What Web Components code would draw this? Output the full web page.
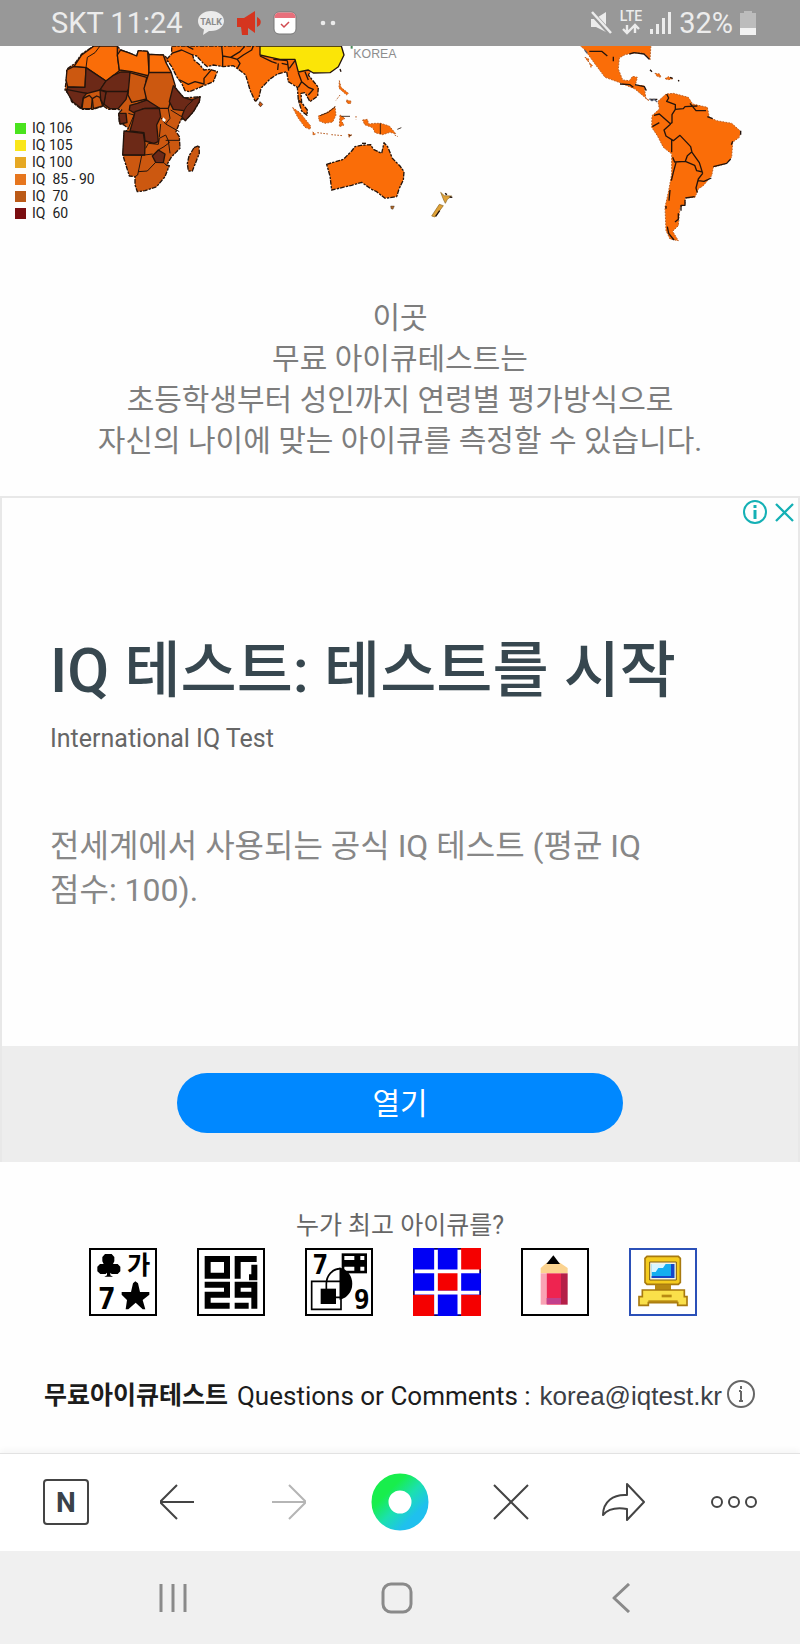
<!DOCTYPE html>
<html lang="ko">
<head>
<meta charset="utf-8">
<meta name="viewport" content="width=device-width, initial-scale=1">
<title>무료아이큐테스트</title>
<style>
    body{
        margin: 0;
        background: #fefefe;
        font-family: Roboto, "Noto Sans CJK KR", sans-serif;
    }
</style>
</head>
<body>
<iq-app>
    <status-bar slot="top"></status-bar>
    <iq-map></iq-map>
    <iq-intro>
        <span>이곳</span>
        <span>무료 아이큐테스트는</span>
        <span>초등학생부터 성인까지 연령별 평가방식으로</span>
        <span>자신의 나이에 맞는 아이큐를 측정할 수 있습니다.</span>
    </iq-intro>
    <ad-card>
        <span slot="title">IQ 테스트: 테스트를 시작</span>
        <span slot="brand">International IQ Test</span>
        <span slot="text">전세계에서 사용되는 공식 IQ 테스트 (평균 IQ 점수: 100).</span>
        <span slot="action">열기</span>
    </ad-card>
    <iq-puzzles>누가 최고 아이큐를?</iq-puzzles>
    <iq-contact mail="korea@iqtest.kr">
        <b slot="name">무료아이큐테스트</b>
        Questions or Comments :
    </iq-contact>
    <browser-toolbar slot="bottom"></browser-toolbar>
    <system-nav slot="bottom"></system-nav>
</iq-app>

<script>
class IqApp extends HTMLElement{
    constructor(){
        super()
        this.attachShadow({mode: 'open'})
        this.shadowRoot.innerHTML = `
            <style>
                :host{
                    display: flex;
                    flex-direction: column;
                    min-height: 100vh;
                }
                main{
                    flex: 1;
                    display: flex;
                    flex-direction: column;
                }
            </style>
            <slot name="top"></slot>
            <main><slot></slot></main>
            <slot name="bottom"></slot>
        `
    }
}

class StatusBar extends HTMLElement{
    constructor(){
        super()
        this.attachShadow({mode: 'open'})
        this.shadowRoot.innerHTML = `
            <style>
                :host{
                    display: flex;
                    justify-content: space-between;
                    align-items: center;
                    height: 46px;
                    padding: 0 43px 0 51px;
                    background: #989898;
                    color: #ececec;
                    font-size: 29px;
                    line-height: 48px;
                }
                .group{
                    display: flex;
                    align-items: center;
                    gap: 12px;
                }
                .left span{
                    margin-right: 2px;
                }
                .right{
                    gap: 7px;
                }
                svg{
                    display: block;
                }
            </style>
            <div class="group left">
                <span>SKT 11:24</span>
                <svg width="28" height="26" viewBox="0 0 28 26">
                    <path d="M14 1C6.500 1 1 5.500 1 11c0 4 2.500 7 6 8.500L6 25l6-4h2c7.500 0 13-4.500 13-10S21.500 1 14 1z" fill="#ececec"/>
                    <text x="14" y="15" text-anchor="middle" font-size="9" font-weight="700" fill="#8b8b8b">TALK</text>
                </svg>
                <svg width="24" height="26" viewBox="0 0 24 26">
                    <path d="M0 8h7L18 1v22l-7-5v7H5l-1-8H0z" fill="#d5351f"/>
                    <path d="M20 7c5 2 5 8 0 10z" fill="#d5351f"/>
                </svg>
                <svg width="24" height="24" viewBox="0 0 24 24">
                    <rect x="1" y="1" width="22" height="22" rx="5" fill="#fff" stroke="#777"/>
                    <path d="M1.500 7V6a4.500 4.500 0 0 1 4.500-4.500h12A4.500 4.500 0 0 1 22.500 6v1z" fill="#e86f7b"/>
                    <path d="M8 13l3 3 5-5" fill="none" stroke="#d04a50" stroke-width="1.500"/>
                </svg>
                <svg width="36" height="8" viewBox="0 0 36 8" fill="#ececec">
                    <circle cx="14" cy="4" r="2.300"/><circle cx="24" cy="4" r="2.300"/>
                </svg>
            </div>
            <div class="group right">
                <svg width="22" height="24" viewBox="0 0 22 24">
                    <path d="M1 8h4l11-7v20L6 16H1z" fill="#ececec"/>
                    <path d="M0 0l21 23" stroke="#989898" stroke-width="5"/>
                    <path d="M2 1l19 21" stroke="#ececec" stroke-width="2.500"/>
                </svg>
                <svg width="24" height="28" viewBox="0 0 24 28">
                    <text x="12" y="12" text-anchor="middle" font-size="14" font-weight="500" fill="#ececec">LTE</text>
                    <path d="M8 16v8M4 20l4 4 4-4M16 24v-8M12 20l4-4 4 4" fill="none" stroke="#ececec" stroke-width="2.400"/>
                </svg>
                <svg width="22" height="24" viewBox="0 0 22 24" fill="#ececec">
                    <path d="M0 18h3v5H0zM6 13h3v10H6zM12 7h3v16h-3zM18 1h3v22h-3z"/>
                </svg>
                <span>32%</span>
                <svg width="17" height="25" viewBox="0 0 17 25">
                    <path d="M4 0h8v2h4v15H0V2h4z" fill="#bcbcbc"/>
                    <path d="M0 17h16v7H0z" fill="#f2f2f2"/>
                </svg>
            </div>
        `
    }
}

class IqMap extends HTMLElement{
    constructor(){
        super()
        this.attachShadow({mode: 'open'})
        this.shadowRoot.innerHTML = `
            <style>
                :host{
                    display: block;
                    position: relative;
                }
                svg{
                    display: block;
                    width: 100%;
                }
                path{
                    stroke-linejoin: round;
                }
                .hi{ fill: #fa6d08; }
                .mid{ fill: #cc5810; }
                .low{ fill: #6c2917; }
                .line{ fill: none; }
                .coast{ stroke-dasharray: 14 3 7 4; }
                .bare{ stroke: #b9622a; stroke-width: 3; stroke-dasharray: 5 4; }
                ul{
                    position: absolute;
                    left: 15px;
                    bottom: 24px;
                    margin: 0;
                    padding: 0;
                    list-style: none;
                    color: #222;
                    font-size: 14px;
                    line-height: 17px;
                }
                li{
                    display: flex;
                    align-items: center;
                    gap: 6px;
                    white-space: pre;
                }
                li::before{
                    content: "";
                    width: 11px;
                    height: 11px;
                    background: var(--c);
                }
            </style>
            <svg viewBox="0 138 2400 600" stroke="#24140c" stroke-width="4">
                <!-- Africa -->
                <path class="mid coast" d="M282 138H352L362 150 385 158 410 168 415 152 443 154 447 163 490 165 508 180 498 188 512 225 520 255 540 280 553 294 600 290 598 305 580 335 556 362 545 355 538 370 528 395 538 410 540 445 515 470 500 495 508 497 495 530 470 560 435 572 412 575 405 555V530L388 528 370 470 372 400 385 385 372 375 358 370 356 340 365 330 350 328 325 328 310 318 280 328 245 328 215 305 208 285 195 270 200 230 200 208 225 190 245 162z"/>
                <path class="hi" d="M282 138H352V165L358 212 330 235 318 243 258 203 222 200 245 165z"/>
                <path class="line" d="M300 138L285 158 262 172 258 203" stroke-width="3"/>
                <path class="hi" d="M352 165L362 150 385 158 410 168 415 152 443 154 447 215V228L395 215 358 210z"/>
                <path class="hi" d="M447 163L490 165 498 188 514 217H447z"/>
                <path class="mid" d="M220 200L258 203 255 262 203 260 198 240 201 210z"/>
                <path class="low" d="M258 203L318 243 300 270 262 280 200 275 203 262 255 262z"/>
                <path class="low" d="M318 243L340 226 362 216H390V260L382 274H320L300 270z"/>
                <path class="low" d="M198 268L260 280 250 292 244 325 218 305 206 285z"/>
                <path class="mid" d="M250 295L268 286 277 296 274 326H246z"/>
                <path class="mid" d="M277 296L290 288 300 292 308 318 280 326z"/>
                <path class="low" d="M318 275H384L378 298 355 325 330 326 311 312z"/>
                <path class="low" d="M300 270L318 276 311 316 302 298z"/>
                <path class="mid" d="M390 218L440 232 434 265 440 297 395 307 384 285z"/>
                <path class="mid" d="M447 218H514L526 258 505 325 470 325 440 300 432 265z"/>
                <path class="low" d="M390 316L412 310 440 300 478 324 430 326 405 340 388 330z"/>
                <path class="low" d="M520 257L550 292 575 300 600 290 598 305 580 335 556 362 545 350 552 332 520 328 508 305z"/>
                <path class="low" d="M405 335L435 325 478 326 482 350 470 375 475 425 462 430 435 423 432 398 390 393 398 365z"/>
                <path class="low" d="M356 340H378L381 368 360 372z"/>
                <path class="low" d="M372 393L430 400 435 432 434 465H368z"/>
                <path class="low" d="M457 468L475 450 495 462 490 488 467 487z"/>
                <path class="line" d="M370 465L425 466 458 462M425 467L413 525 405 530M467 487L442 513 415 515M437 445L445 430 475 433 478 415 497 405 508 428 492 440 475 450M497 421H540M505 422L510 460M482 352L497 372 538 395M482 372L478 412M505 327L510 355 497 372M512 330L545 350M385 340L402 345 385 385M492 488L500 497M552 332L560 318 580 300" stroke-width="3"/>
                <path d="M490 352l8 8-5 6-7-6z" fill="#fff" stroke="none"/>
                <path class="mid coast" d="M582 443L597 437 598 460 577 513 565 513 562 490 567 468z"/>

                <!-- Middle East and South Asia -->
                <path class="hi coast" d="M515 138H780L885 178 935 210 925 225 937 240 955 262 953 288 930 305 915 278 903 280 905 308 922 330 921 346 905 333 895 300 892 262 865 245 860 215 833 222 810 237 783 265 777 292 766 305 750 270 737 225 722 213 700 197 670 200 640 195 622 200 610 190 590 168 578 165 582 180 600 195 612 210 630 208 652 215 640 245 600 262 568 275 555 272 545 250 530 230 515 200 500 178 515 162z"/>
                <path class="line" d="M515 160L545 150 578 165M560 138L580 148M540 240L565 253 585 245 612 252 612 235 635 208M665 138L668 168 692 172 720 155 735 138M668 168V198M692 172L712 178 730 165 755 150 760 138M712 178L720 190 712 205M780 168L815 185 830 190M820 178L862 182M835 190L833 210M862 182L866 212M845 190L862 194M885 182L868 205M895 218L905 245 895 262M905 245L925 262 940 268 925 285M915 215L925 240M895 300L905 308"/>
                <path d="M780 138H1024L1032 165 1015 200 990 218 940 219 925 210 895 216 885 178 840 178 812 172 780 165z" fill="#fbe507"/>
                <path class="mid" d="M780 305l8 8-6 7-6-5z" stroke-width="2"/>
                <path class="line" d="M1020 207l3 8"/>
                <path d="M1052 138h6v8h-6z" fill="#4c8a5a" stroke="none"/>

                <!-- South-east Asia -->
                <g class="hi bare">
                    <path d="M878 323L900 338 932 378 930 388 915 382 895 355z"/>
                    <path d="M955 348L980 338 1005 320 1008 345 998 366 975 370 958 363z"/>
                    <path d="M1020 345L1035 355 1024 362 1032 375 1018 380z"/>
                    <path d="M1018 242L1023 262 1045 280 1040 285 1017 265z"/>
                    <path d="M1040 300l14 4-4 8-10-4zM1020 285l-12 16"/>
                    <path d="M1088 360L1102 358 1106 372 1125 370 1142 370 1168 378 1188 402 1170 397 1148 404 1125 398 1118 383 1094 374z"/>
                    <path d="M938 396l8 6-6 4zM952 398l32 4M994 404l34 3M1045 403l10 2-8 7zM1068 348v10M1184 405l10 5"/>
                </g>
                <path class="line" d="M960 347L985 337 1006 320M1141 370V402M1024 349H1050M1192 388l12-5M1046 408l8-3" stroke-width="2.500"/>

                <!-- Australia and New Zealand -->
                <path class="hi coast" d="M980 493L1030 478 1055 453 1065 440 1082 436 1112 434 1120 448 1145 460 1152 428 1163 440 1177 475 1200 498 1212 515 1210 540 1197 567 1190 590 1155 595 1130 575 1115 568 1085 547 1055 556 995 570 990 528z"/>
                <path class="line" d="M1086 430h12"/>
                <path d="M1172 618h11l-4 10-6-2z" fill="#a8672c" stroke-width="1"/>
                <path d="M1322 577L1333 587 1355 588 1342 598 1336 610 1331 600zM1295 648L1318 613 1330 617 1305 651z" fill="#dfa136" stroke="#8a6420" stroke-width="2"/>
                <path class="line" d="M1335 580l6 4M1349 591l8 1M1307 649l12-17"/>

                <!-- The Americas -->
                <g transform="translate(1710 132)">
                    <g class="hi bare">
                        <path d="M25 0H243L240 48 228 32 212 26 185 28 165 32 148 42 145 75 158 108 178 110 188 97 202 100 196 124 222 125 228 165 238 170 215 152 195 135 150 116 105 100 75 60 45 18z"/>
                        <path d="M45 40l12 6-2 8zM58 56l9 8-4 6z"/>
                        <path d="M255 88l14 2 4 10-12-3zM285 104l10-6 14 6-14 3z"/>
                        <path d="M264 172L288 150 310 148 355 160 368 180 412 190 418 220 440 230 485 238 512 262 508 280 488 295 485 340 470 358 430 370 425 395 400 425 385 435 375 460 345 462 345 482 330 490 325 545 308 562 325 590 300 585 288 560 285 490 296 440 305 390V330L280 310 262 275 245 250 246 215 268 195z"/>
                    </g>
                    <path class="line" d="M58 22L95 22 112 36M130 38v14M178 30L192 26 222 30 238 46M150 120L180 122 190 130M195 122l28 6 6 12M240 77l6 6M300 100l8 3M325 108l2 4M240 166h22M290 150L296 162 290 172 316 182V196L340 194 345 188 382 186M360 178L378 200 408 200M316 196L306 212V236L300 240M252 214L268 210 302 240M247 248L268 236M302 240L282 258 288 276 310 290 330 274 345 290 362 308 366 325 388 356 398 388M305 286V325M308 340L314 354 346 352 352 335 364 325M346 352L374 364 380 380 398 384M318 356L310 385 304 410M398 388L385 405 378 432 382 446M385 410L402 412 424 402M512 260v12M488 292l-4 10M482 345L470 358 430 368M300 438L297 470M288 486v8M292 548L296 568 312 588M346 462L374 458M345 468v16h-12v16M325 508v18l-10 8M412 218l16 6"/>
                    <path class="line" d="M238 164l8 6 6-4 10 8M44 18l8 10" stroke="#555d70"/>
                </g>
                <text x="1060" y="175" font-family="Liberation Sans, sans-serif" font-size="37" fill="#8d8d8d" stroke="none">KOREA</text>
            </svg>
            <ul>
                <li style="--c: #4ae31e">IQ 106</li>
                <li style="--c: #fae61a">IQ 105</li>
                <li style="--c: #e6a823">IQ 100</li>
                <li style="--c: #e6761e">IQ  85 - 90</li>
                <li style="--c: #bb5a17">IQ  70</li>
                <li style="--c: #7a0d10">IQ  60</li>
            </ul>
        `
    }
}

class IqIntro extends HTMLElement{
    constructor(){
        super()
        this.attachShadow({mode: 'open'})
        this.shadowRoot.innerHTML = `
            <style>
                :host{
                    display: block;
                    padding: 51px 16px 35px;
                    color: #7d7d7d;
                    font-size: 30px;
                    line-height: 41px;
                    text-align: center;
                }
                ::slotted(span){
                    display: block;
                }
                p{
                    margin: 0;
                }
            </style>
            <p><slot></slot></p>
        `
    }
}

class AdCard extends HTMLElement{
    constructor(){
        super()
        this.attachShadow({mode: 'open'})
        this.shadowRoot.innerHTML = `
            <style>
                :host{
                    display: block;
                    position: relative;
                    border: 2px solid #e8e8e8;
                    border-bottom: 0;
                }
                .marks{
                    position: absolute;
                    top: 1px;
                    right: 0;
                    display: flex;
                    gap: 4px;
                }
                .marks button{
                    width: 26px;
                    height: 26px;
                    padding: 0;
                    border: 0;
                    background: none;
                }
                svg{
                    display: block;
                }
                .body{
                    padding: 138px 130px 134px 48px;
                }
                h2{
                    margin: 0 -72px 17px 0;
                    color: #37474f;
                    font-size: 61px;
                    font-weight: 500;
                    line-height: 70px;
                }
                .brand{
                    margin: 0 0 69px;
                    color: #666;
                    font-size: 25px;
                    line-height: 32px;
                }
                .text{
                    margin: 0;
                    color: #878787;
                    font-size: 32px;
                    line-height: 44px;
                }
                .action{
                    padding: 27px 0 29px;
                    background: #ededed;
                }
                .action button{
                    display: block;
                    width: 56%;
                    height: 60px;
                    margin: 0 auto;
                    padding: 0 0 4px;
                    border: 0;
                    border-radius: 30px;
                    background: #0088ff;
                    color: #fff;
                    font: inherit;
                    font-size: 30px;
                }
            </style>
            <div class="marks">
                <button aria-label="광고 정보">
                    <svg width="26" height="26" viewBox="0 0 26 26" fill="none" stroke="#14b0b5" stroke-width="2">
                        <circle cx="13" cy="13" r="11"/>
                        <path d="M13 6v3M13 11v9" stroke-width="3"/>
                    </svg>
                </button>
                <button aria-label="광고 닫기">
                    <svg width="26" height="26" viewBox="0 0 26 26" fill="none" stroke="#14b0b5" stroke-width="2.300">
                        <path d="M4 5l17 17M21 5L4 22"/>
                    </svg>
                </button>
            </div>
            <div class="body">
                <h2><slot name="title"></slot></h2>
                <p class="brand"><slot name="brand"></slot></p>
                <p class="text"><slot name="text"></slot></p>
            </div>
            <div class="action">
                <button><slot name="action"></slot></button>
            </div>
        `
    }
}

class IqPuzzles extends HTMLElement{
    constructor(){
        super()
        this.attachShadow({mode: 'open'})
        this.shadowRoot.innerHTML = `
            <style>
                :host{
                    display: block;
                    padding: 48px 14px 0 0;
                }
                h3{
                    margin: 0 -14px 6px 0;
                    color: #666;
                    font-size: 25px;
                    font-weight: 400;
                    line-height: 32px;
                    text-align: center;
                }
                nav{
                    display: flex;
                    justify-content: center;
                    gap: 40px;
                }
                a{
                    color: #000;
                }
                svg{
                    display: block;
                    width: 68px;
                    height: 68px;
                }
                text{
                    font-family: "DejaVu Sans Mono", "Noto Sans CJK KR", monospace;
                    font-weight: 700;
                }
                .frame{
                    fill: #fff;
                    stroke: #000;
                    stroke-width: 6;
                }
            </style>
            <h3><slot></slot></h3>
            <nav>
                <a href="#memory" aria-label="기억력">
                    <svg viewBox="0 0 204 204">
                        <rect class="frame" x="3" y="3" width="198" height="198"/>
                        <path d="M48 18h20l8 9v13l-4 8h14l8 8v14l-8 8H68l-4-4v8l8 4H46l8-4v-8l-4 4H34l-9-8V56l8-8h11l-4-8V27z"/>
                        <path d="M139 100l8 6 6 26h28v8l-20 16 8 28h-8l-21-20-22 20h-8l4-28-16-16v-8h28l6-26z"/>
                        <text x="114" y="77" font-size="76">가</text>
                        <text x="26" y="184" font-size="90">7</text>
                    </svg>
                </a>
                <a href="#code" aria-label="암호">
                    <svg viewBox="0 0 204 204">
                        <rect class="frame" x="3" y="3" width="198" height="198"/>
                        <g fill="none" stroke="#000" stroke-width="18">
                            <path d="M32 33h58v50H32zM122 92V33h57M172 50v38h-16"/>
                            <path d="M23 110h67v30H32v33h66M172 182v-72h-50v30h50M113 173h42"/>
                        </g>
                    </svg>
                </a>
                <a href="#shape" aria-label="도형">
                    <svg viewBox="0 0 204 204">
                        <rect class="frame" x="3" y="3" width="198" height="198"/>
                        <text x="22" y="78" font-size="80">7</text>
                        <text x="146" y="184" font-size="80">9</text>
                        <path d="M110 16h76v60h-76z"/>
                        <path d="M118 24h30v12h-30zM166 24h12v12h-12zM118 56h30v12h-30zM166 56h12v12h-12z" fill="#fff"/>
                        <path d="M106 62a42 46 0 0 1 0 90z" stroke="#000" stroke-width="5"/>
                        <path d="M106 62a42 46 0 0 0-42 46v16M92 148h22M20 100h88v84H20z" fill="none" stroke="#000" stroke-width="5"/>
                        <path d="M47 122h46v46H47z"/>
                    </svg>
                </a>
                <a href="#color" aria-label="색상">
                    <svg viewBox="0 0 204 204">
                        <rect width="204" height="204" fill="#0000f5"/>
                        <path d="M140 0h64v68h-64zM72 72h64v56H72zM0 140h64v64H0zM144 140h60v64h-60z" fill="#f50000"/>
                        <path d="M69 5v194M139 5v194M5 70h194M5 134h194" stroke="#fff" stroke-width="11"/>
                        <path d="M64 2h10M134 2h10M64 202h10M134 202h10M2 64v12M2 128v12M202 64v12M202 128v12" stroke="#101040" stroke-width="4"/>
                    </svg>
                </a>
                <a href="#pencil" aria-label="필기">
                    <svg viewBox="0 0 204 204">
                        <rect class="frame" x="3" y="3" width="198" height="198"/>
                        <path d="M59 76V60l18-16h40l23 16v16z" fill="#fbd390"/>
                        <path d="M76 48l21-26 20 26z"/>
                        <path d="M59 76h18v94H59z" fill="#f9a3b4"/>
                        <path d="M77 76h43v94H77z" fill="#ee2450"/>
                        <path d="M120 76h20v94h-20z" fill="#b52048"/>
                        <path d="M77 150h43v18H77z" fill="#c2408c"/>
                    </svg>
                </a>
                <a href="#computer" aria-label="컴퓨터">
                    <svg viewBox="0 0 204 204">
                        <rect class="frame" x="3" y="3" width="198" height="198" style="stroke: #2b50b8"/>
                        <path d="M54 25h94l6 6v72l-6 6H54l-6-6V31z" fill="#f5cc1e" stroke="#a87a10" stroke-width="5"/>
                        <path d="M62 42h80v54H62z" fill="#f8f4e0" stroke="#7a5c14" stroke-width="3"/>
                        <path d="M68 48h68v42H68z" fill="#15aef0"/>
                        <path d="M68 48h42l-8 12H88l-8 12H68z" fill="#d8f5ff"/>
                        <path d="M126 48h10v42H68v-6h58z" fill="#1746c8"/>
                        <path d="M78 110h48v16H78z" fill="#b88a12"/>
                        <path d="M40 126h126v20h8v26h-28v-8H58v8H30v-26h10z" fill="#fae04a" stroke="#a87a10" stroke-width="5"/>
                        <path d="M58 160h88" stroke="#b88a12" stroke-width="6"/>
                        <path d="M98 144h30" stroke="#b88a12" stroke-width="8"/>
                    </svg>
                </a>
            </nav>
        `
    }
}

class IqContact extends HTMLElement{
    constructor(){
        super()
        this.attachShadow({mode: 'open'})
        this.shadowRoot.innerHTML = `
            <style>
                :host{
                    display: flex;
                    justify-content: center;
                    align-items: center;
                    margin: 63px 0 40px;
                    color: #1c1c1c;
                    font-size: 26px;
                    line-height: 32px;
                    white-space: nowrap;
                }
                ::slotted(b){
                    font-size: 25px;
                }
                .label{
                    margin: 0 9px;
                }
                a{
                    color: #3c3f46;
                    font-family: "Liberation Sans", sans-serif;
                    text-decoration: none;
                }
                button{
                    margin-left: 4px;
                    padding: 0 0 4px;
                    border: 0;
                    background: none;
                }
                svg{
                    display: block;
                }
            </style>
            <slot name="name"></slot>
            <span class="label"><slot></slot></span>
            <a></a>
            <button aria-label="정보">
                <svg width="30" height="30" viewBox="0 0 30 30" fill="none" stroke="#666" stroke-width="2">
                    <circle cx="15" cy="15" r="13"/>
                    <path d="M15 7v3M15 12v10M13 12h2M13 22h4"/>
                </svg>
            </button>
        `
    }
    connectedCallback(){
        const mail = this.getAttribute('mail')
        const link = this.shadowRoot.querySelector('a')
        link.href = 'mailto:' + mail
        link.textContent = mail
    }
}

class BrowserToolbar extends HTMLElement{
    constructor(){
        super()
        this.attachShadow({mode: 'open'})
        this.shadowRoot.innerHTML = `
            <style>
                :host{
                    display: grid;
                    grid-template-columns: repeat(7, 1fr);
                    height: 95px;
                    padding: 0 10px 2px;
                    border-top: 1px solid #e2e2e2;
                    box-shadow: 0 -3px 6px rgba(0,0,0,.04);
                    background: #fff;
                }
                button{
                    display: flex;
                    justify-content: center;
                    align-items: center;
                    padding: 0;
                    border: 0;
                    background: none;
                    font: inherit;
                }
                svg{
                    fill: none;
                    stroke: #444;
                    stroke-width: 2;
                }
                [disabled] svg{
                    stroke: #b5b5b5;
                }
            </style>
            <button aria-label="네이버 홈">
                <svg width="46" height="46" viewBox="0 0 46 46">
                    <rect x="1" y="1" width="44" height="44" rx="3"/>
                    <text x="23" y="33" text-anchor="middle" font-size="28" font-weight="700" fill="#3a424a" stroke="none">N</text>
                </svg>
            </button>
            <button aria-label="뒤로">
                <svg width="36" height="36" viewBox="0 0 36 36"><path d="M35 18H2M18 1L2 17v2l16 16"/></svg>
            </button>
            <button aria-label="앞으로" disabled>
                <svg width="36" height="36" viewBox="0 0 36 36"><path d="M1 18h33M18 1l16 16v2L18 35"/></svg>
            </button>
            <button aria-label="그린닷">
                <svg width="58" height="58" viewBox="0 0 58 58">
                    <defs>
                        <linearGradient id="dot" x1="0.150" y1="0.150" x2="0.850" y2="0.850">
                            <stop offset="0.100" stop-color="#18ee4c"/>
                            <stop offset="0.550" stop-color="#1be0b0"/>
                            <stop offset="1" stop-color="#1fc0ee"/>
                        </linearGradient>
                    </defs>
                    <circle cx="29" cy="29" r="20" stroke="url(#dot)" stroke-width="17"/>
                </svg>
            </button>
            <button aria-label="닫기">
                <svg width="36" height="36" viewBox="0 0 36 36"><path d="M1 1l34 34M35 1L1 35"/></svg>
            </button>
            <button aria-label="공유">
                <svg width="44" height="40" viewBox="0 0 44 40" stroke-linejoin="round"><path d="M26 2l17 18-17 18V27C14 25 7 27 2 33 2 20 12 12 26 13z"/></svg>
            </button>
            <button aria-label="더보기">
                <svg width="48" height="14" viewBox="0 0 48 14"><circle cx="7" cy="7" r="5"/><circle cx="24" cy="7" r="5"/><circle cx="41" cy="7" r="5"/></svg>
            </button>
        `
    }
}

class SystemNav extends HTMLElement{
    constructor(){
        super()
        this.attachShadow({mode: 'open'})
        this.shadowRoot.innerHTML = `
            <style>
                :host{
                    display: grid;
                    grid-template-columns: repeat(3, 1fr);
                    height: 93px;
                    padding: 0 67px 0 61px;
                    background: #f0f0f0;
                }
                button{
                    display: flex;
                    justify-content: center;
                    align-items: center;
                    padding: 0;
                    border: 0;
                    background: none;
                }
                svg{
                    fill: none;
                    stroke: #8a8a8a;
                    stroke-width: 3;
                }
            </style>
            <button aria-label="최근 앱">
                <svg width="30" height="30" viewBox="0 0 30 30"><path d="M3 1v28M15 1v28M27 1v28"/></svg>
            </button>
            <button aria-label="홈">
                <svg width="32" height="32" viewBox="0 0 32 32"><rect x="2" y="2" width="28" height="28" rx="8"/></svg>
            </button>
            <button aria-label="뒤로">
                <svg width="20" height="30" viewBox="0 0 20 30" stroke-linejoin="round"><path d="M18 1L3 15l15 14"/></svg>
            </button>
        `
    }
}

customElements.define('iq-app', IqApp)
customElements.define('status-bar', StatusBar)
customElements.define('iq-map', IqMap)
customElements.define('iq-intro', IqIntro)
customElements.define('ad-card', AdCard)
customElements.define('iq-puzzles', IqPuzzles)
customElements.define('iq-contact', IqContact)
customElements.define('browser-toolbar', BrowserToolbar)
customElements.define('system-nav', SystemNav)
</script>
</body>
</html>
